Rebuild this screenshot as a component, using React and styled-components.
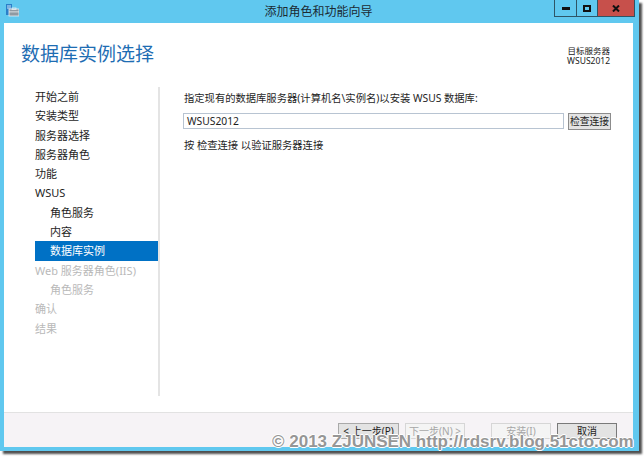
import React from "react";
import styled, { createGlobalStyle } from "styled-components";

const GlobalStyle = createGlobalStyle`
    html, body {
        margin: 0;
        padding: 0;
        background: #fff;
        font-family: "Noto Sans", "Noto Sans CJK SC", sans-serif;
    }
`;

const Page = styled.div`
    position: relative;
    width: 644px;
    height: 458px;
    overflow: hidden;
    background: #fff;
`;

const Window = styled.div`
    display: flex;
    flex-direction: column;
    width: 639px;
    height: 451px;
    padding: 0 6px 4px 4px;
    box-sizing: border-box;
    background: #60c8ef;
    box-shadow: 3px 3px 2px rgba(20, 20, 20, 0.75);
`;

const TitleBar = styled.div`
    position: relative;
    display: flex;
    align-items: flex-start;
    height: 23px;
    flex-shrink: 0;
`;

const AppIcon = styled.svg`
    margin: 4px 0 0 1px;
`;

const Title = styled.div`
    position: absolute;
    left: 0;
    right: 0;
    top: 3px;
    text-align: center;
    font-size: 12px;
    line-height: 16px;
    color: #1b2a33;
    font-family: "Noto Sans CJK SC", sans-serif;
    pointer-events: none;
`;

const Caption = styled.div`
    display: flex;
    margin-left: auto;
    margin-right: -2px;
`;

const CaptionButton = styled.div`
    display: flex;
    align-items: center;
    justify-content: center;
    width: ${(p) => p.w}px;
    height: 17px;
    box-sizing: border-box;
    border: 1px solid #2e5566;
    border-top: 0;
    margin-left: -1px;
    background: ${(p) => (p.close ? "#c7504b" : "#60c8ef")};
`;

const Body = styled.div`
    flex: 1;
    display: flex;
    flex-direction: column;
    background: #fff;
`;

const Header = styled.div`
    display: flex;
    justify-content: space-between;
    align-items: flex-start;
    height: 64px;
    padding: 18px 23px 0 17px;
    box-sizing: border-box;
`;

const PageTitle = styled.h1`
    margin: 0;
    font-size: 19px;
    line-height: 24px;
    font-weight: 400;
    color: #1e6db3;
    font-family: "Noto Sans CJK SC", sans-serif;
`;

const Target = styled.div`
    margin-top: 5px;
    text-align: right;
    font-size: 8.5px;
    line-height: 10px;
    color: #222;
`;

const Columns = styled.div`
    display: flex;
    height: 309px;
    padding-left: 31px;
`;

const Nav = styled.ul`
    list-style: none;
    margin: 0;
    padding: 0;
    width: 123px;
`;

const NavItem = styled.li`
    height: 19.3px;
    line-height: 19.3px;
    padding-left: ${(p) => (p.sub ? 15 : 0)}px;
    font-size: 11px;
    white-space: nowrap;
    color: ${(p) => (p.active ? "#fff" : p.disabled ? "#b9b9b9" : "#1e1e1e")};
    background: ${(p) => (p.active ? "#0071c5" : "transparent")};
`;

const Divider = styled.div`
    width: 2px;
    background: #e4e4e4;
`;

const Content = styled.div`
    flex: 1;
    padding: 4px 0 0 24px;
    font-size: 10.3px;
    color: #1e1e1e;
`;

const Line = styled.div`
    line-height: 14px;
    white-space: nowrap;
`;

const Row = styled.div`
    display: flex;
    align-items: flex-start;
    gap: 4px;
    margin: 8px 0 8px -1px;
`;

const TextBox = styled.div`
    width: 381px;
    height: 16px;
    box-sizing: border-box;
    border: 1px solid #b8c4d2;
    padding-left: 3px;
    line-height: 14px;
`;

const SmallButton = styled.div`
    width: 43px;
    height: 17px;
    box-sizing: border-box;
    border: 1px solid #8c8c8c;
    background: #e3e3e3;
    text-align: center;
    font-size: 9.8px;
    line-height: 15px;
    white-space: nowrap;
    overflow: hidden;
`;

const Spacer = styled.div`
    flex: 1;
`;

const Footer = styled.div`
    display: flex;
    align-items: flex-start;
    height: 35px;
    box-sizing: border-box;
    padding: 10px 16px 0 0;
    background: #f6f3f6;
    border-top: 1px solid #e2e2e2;
`;

const FooterButton = styled.div`
    width: ${(p) => p.w || 60}px;
    height: 16px;
    box-sizing: border-box;
    margin-left: ${(p) => p.gap}px;
    border: 1px solid ${(p) => (p.disabled ? "#d6d6d6" : p.strong ? "#7a7a7a" : "#a9a9a9")};
    background: ${(p) => (p.disabled ? "#f4f4f4" : "#e3e3e3")};
    color: ${(p) => (p.disabled ? "#a6a6a6" : "#1e1e1e")};
    font-size: 10px;
    line-height: 14px;
    text-align: center;
    white-space: nowrap;
`;

const Watermark = styled.div`
    position: absolute;
    left: 272px;
    top: 432px;
    font-family: "Liberation Sans", Arial, sans-serif;
    font-weight: 700;
    font-size: 17px;
    line-height: 20px;
    color: #969696;
    white-space: nowrap;
    text-shadow: 1px 0 0 #fff, -1px 0 0 #fff, 0 1px 0 #fff, 0 -1px 0 #fff;
    pointer-events: none;
`;

const navItems = [
    { label: "开始之前" },
    { label: "安装类型" },
    { label: "服务器选择" },
    { label: "服务器角色" },
    { label: "功能" },
    { label: "WSUS" },
    { label: "角色服务", sub: true },
    { label: "内容", sub: true },
    { label: "数据库实例", sub: true, active: true },
    { label: "Web 服务器角色(IIS)", disabled: true },
    { label: "角色服务", sub: true, disabled: true },
    { label: "确认", disabled: true },
    { label: "结果", disabled: true },
];

function WizardIcon() {
    return (
        <AppIcon width="14" height="13" viewBox="0 0 14 13">
            <rect x="1" y="0" width="6" height="11" fill="#2a7fc9" />
            <rect x="2" y="1.5" width="4" height="1" fill="#cde8fb" />
            <rect x="2" y="3.5" width="4" height="1" fill="#cde8fb" />
            <rect x="4" y="5" width="10" height="7" fill="#8f9aa3" stroke="#e9eef2" strokeWidth="0.8" />
            <rect x="7" y="4" width="4" height="1.5" fill="none" stroke="#e9eef2" strokeWidth="0.8" />
            <rect x="4" y="7.5" width="10" height="0.8" fill="#e9eef2" />
        </AppIcon>
    );
}

export default function App() {
    return (
        <Page>
            <GlobalStyle />
            <Window>
                <TitleBar>
                    <WizardIcon />
                    <Title>添加角色和功能向导</Title>
                    <Caption>
                        <CaptionButton w={23}>
                            <svg width="8" height="3"><rect width="8" height="3" fill="#111" /></svg>
                        </CaptionButton>
                        <CaptionButton w={22}>
                            <svg width="8" height="7"><rect x="1" y="1" width="6" height="5" fill="none" stroke="#111" strokeWidth="2" /></svg>
                        </CaptionButton>
                        <CaptionButton w={38} close>
                            <svg width="8" height="7" viewBox="0 0 8 7">
                                <path d="M1 0.5 L7 6.5 M7 0.5 L1 6.5" stroke="#111" strokeWidth="2" />
                            </svg>
                        </CaptionButton>
                    </Caption>
                </TitleBar>
                <Body>
                    <Header>
                        <PageTitle>数据库实例选择</PageTitle>
                        <Target>
                            <div>目标服务器</div>
                            <div>WSUS2012</div>
                        </Target>
                    </Header>
                    <Columns>
                        <Nav>
                            {navItems.map((item, i) => (
                                <NavItem key={i} sub={item.sub} active={item.active} disabled={item.disabled}>
                                    {item.label}
                                </NavItem>
                            ))}
                        </Nav>
                        <Divider />
                        <Content>
                            <Line>指定现有的数据库服务器(计算机名\实例名)以安装 WSUS 数据库:</Line>
                            <Row>
                                <TextBox>WSUS2012</TextBox>
                                <SmallButton>检查连接</SmallButton>
                            </Row>
                            <Line>按 检查连接 以验证服务器连接</Line>
                        </Content>
                    </Columns>
                    <Spacer />
                    <Footer>
                        <Spacer />
                        <FooterButton w={61} gap={0}>&lt; 上一步(P)</FooterButton>
                        <FooterButton gap={6} disabled>下一步(N) &gt;</FooterButton>
                        <FooterButton gap={26} disabled>安装(I)</FooterButton>
                        <FooterButton gap={6} strong>取消</FooterButton>
                    </Footer>
                </Body>
            </Window>
            <Watermark>© 2013 ZJUNSEN http://rdsrv.blog.51cto.com</Watermark>
        </Page>
    );
}
